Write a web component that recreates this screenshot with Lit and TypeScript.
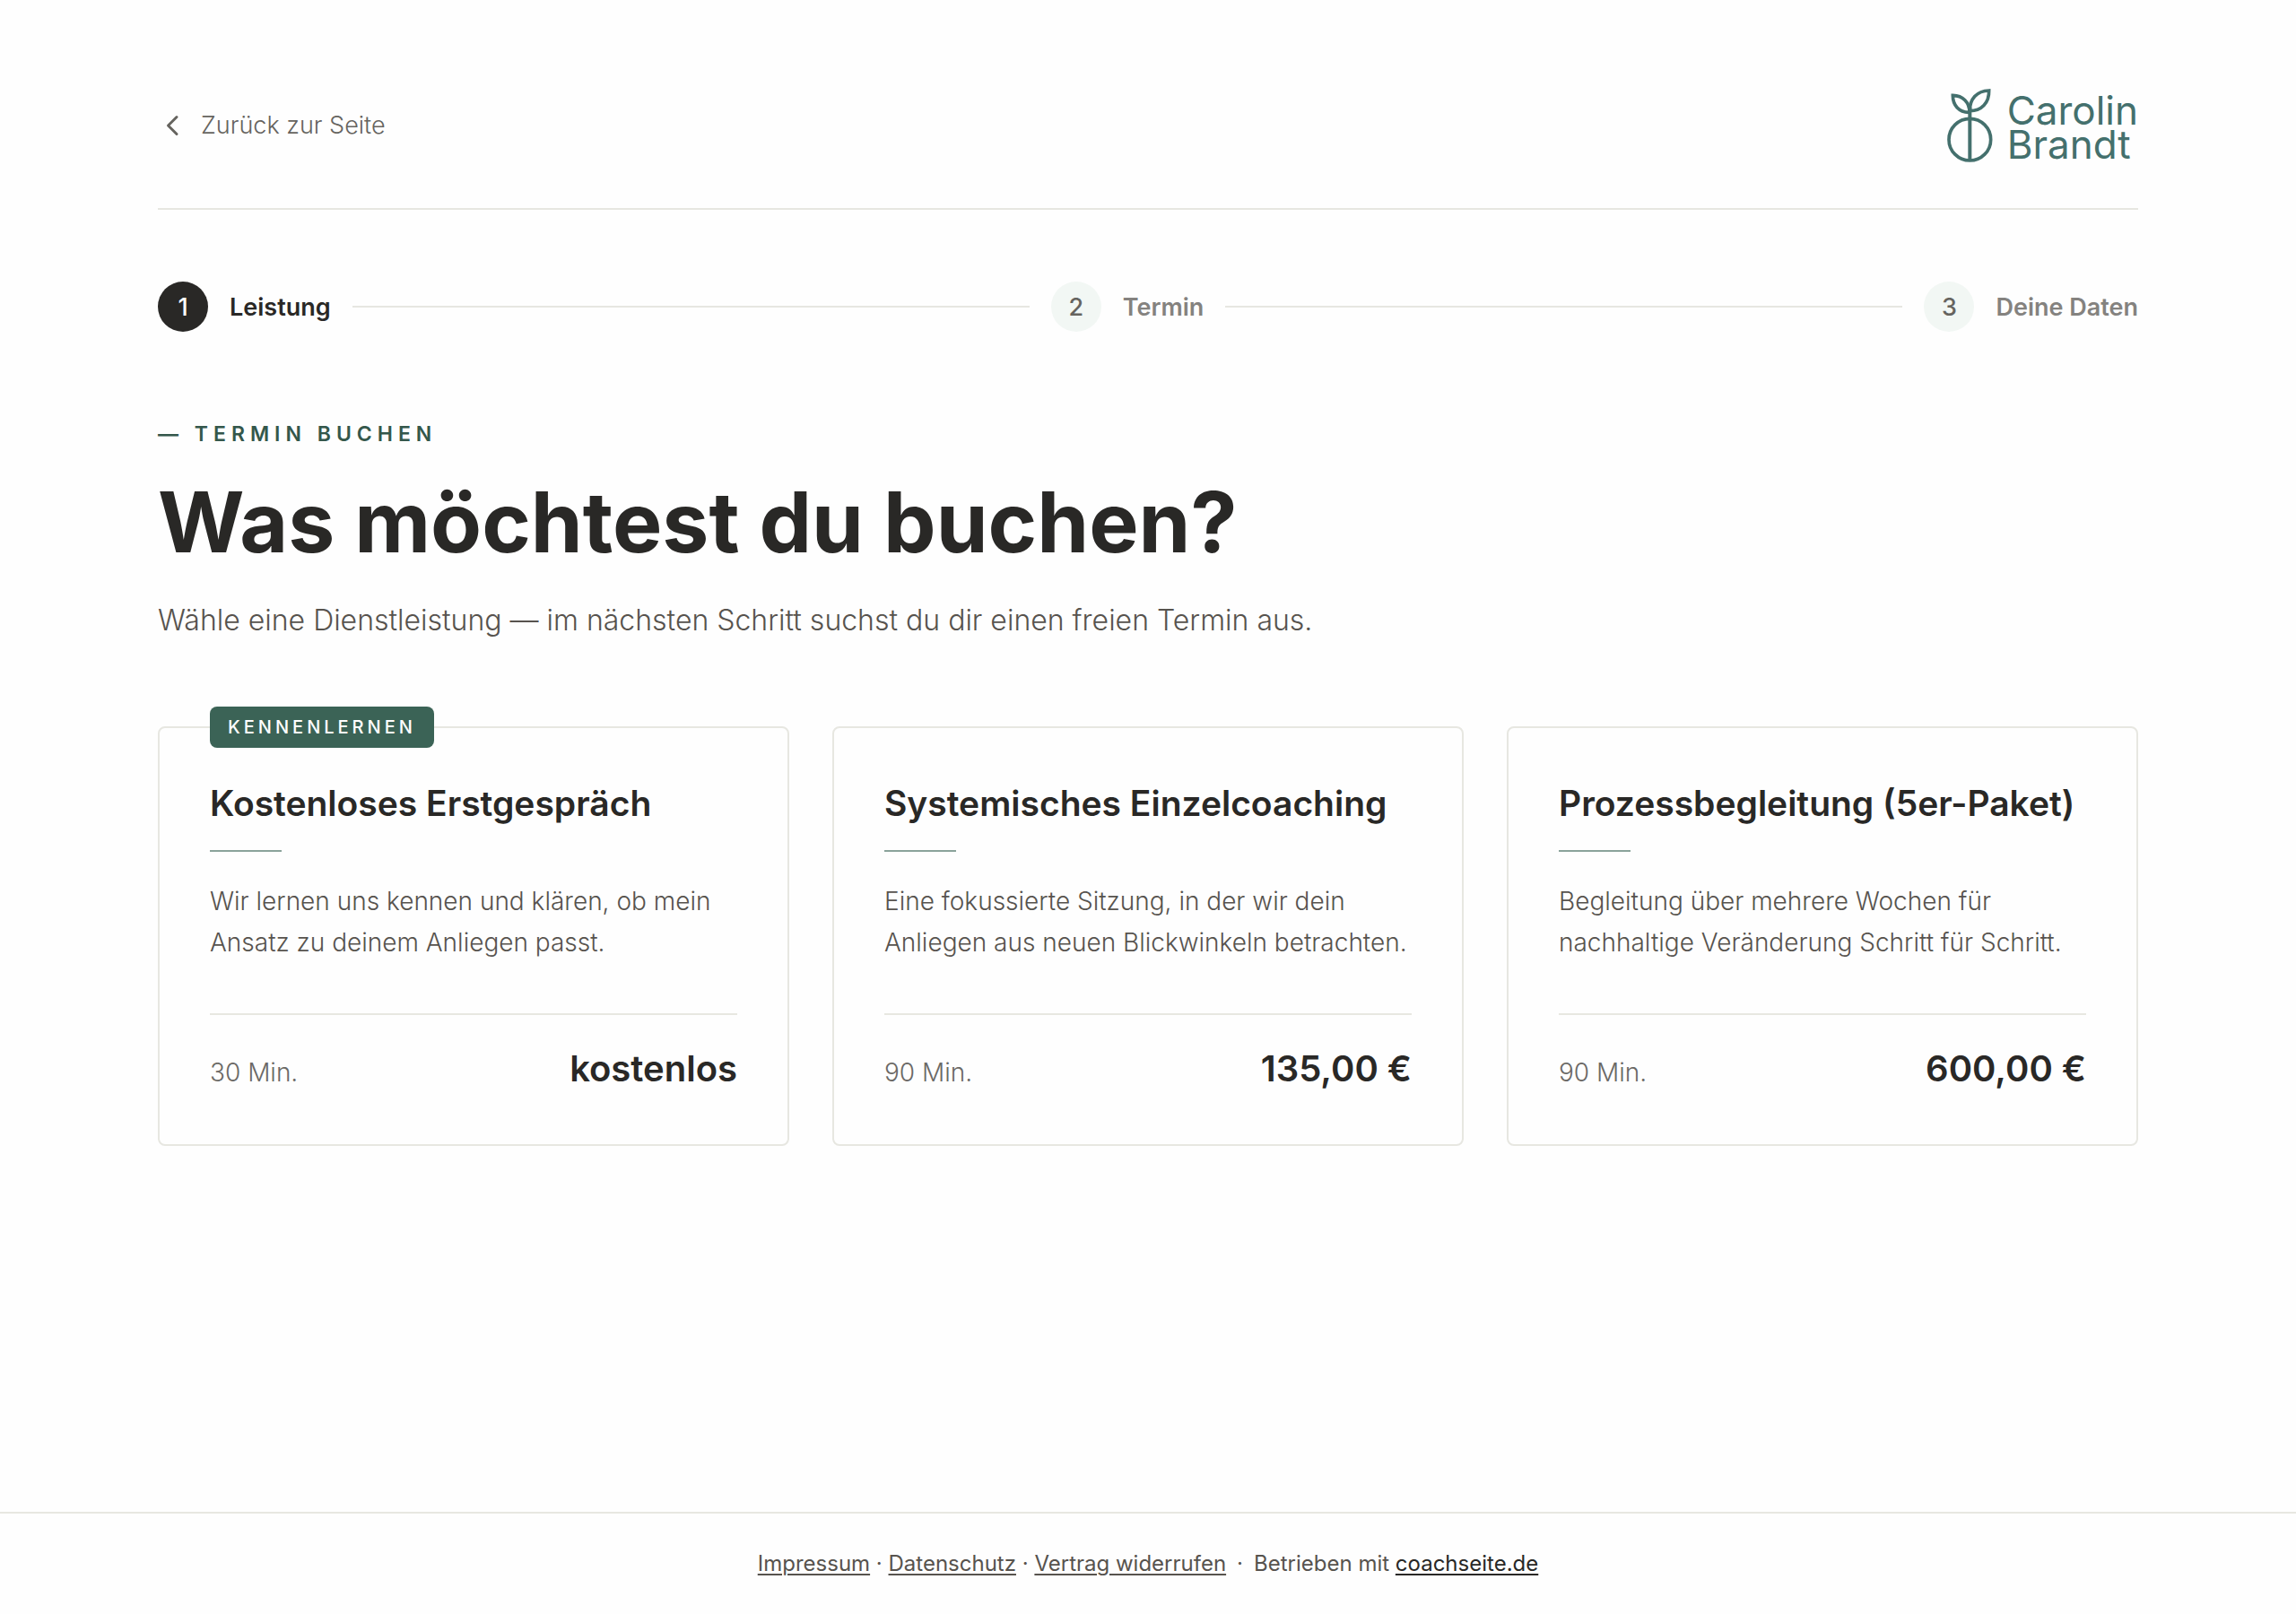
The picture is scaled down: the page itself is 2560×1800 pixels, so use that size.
import { LitElement, html, css, svg, nothing } from "lit";
import { customElement, property } from "lit/decorators.js";
import { classMap } from "lit/directives/class-map.js";

interface Service {
  title: string;
  text: string;
  duration: string;
  price: string;
  badge?: string;
}

const SERVICES: Service[] = [
  {
    title: "Kostenloses Erstgespräch",
    text: "Wir lernen uns kennen und klären, ob mein Ansatz zu deinem Anliegen passt.",
    duration: "30 Min.",
    price: "kostenlos",
    badge: "Kennenlernen",
  },
  {
    title: "Systemisches Einzelcoaching",
    text: "Eine fokussierte Sitzung, in der wir dein Anliegen aus neuen Blickwinkeln betrachten.",
    duration: "90 Min.",
    price: "135,00\u00a0€",
  },
  {
    title: "Prozessbegleitung (5er-Paket)",
    text: "Begleitung über mehrere Wochen für nachhaltige Veränderung Schritt für Schritt.",
    duration: "90 Min.",
    price: "600,00\u00a0€",
  },
];

const STEPS = ["Leistung", "Termin", "Deine Daten"];

const chevron = svg`<path d="M21 6.500 L11.500 16 L21 25.500" fill="none" stroke="currentColor" stroke-width="3" stroke-linecap="round" stroke-linejoin="round" />`;

const sprout = svg`
  <g fill="none" stroke="currentColor" stroke-width="11">
    <circle cx="169" cy="227" r="70" />
    <path d="M169 297 V118" stroke-width="12" />
    <path d="M168 136 C132 137 112 112 112 79 C146 80 168 102 168 136 Z" />
    <path d="M169 131 C168 92 192 64 233 63 C234 104 208 131 169 131 Z" />
  </g>
`;

@customElement("brand-logo")
export class BrandLogo extends LitElement {
  static styles = css`
    :host {
      display: block;
    }
    .logo {
      display: flex;
      align-items: center;
      gap: 16px;
      color: #44706d;
      text-decoration: none;
    }
    .mark {
      width: 52px;
      height: 84px;
      flex: none;
    }
    .name {
      display: grid;
      padding-top: 4px;
      font-size: 44px;
      line-height: 38px;
    }
  `;

  render() {
    return html`
      <a class="logo" href="#">
        <svg class="mark" viewBox="90 54 156 252" aria-hidden="true">${sprout}</svg>
        <span class="name"><span>Carolin</span><span>Brandt</span></span>
      </a>
    `;
  }
}

@customElement("service-card")
export class ServiceCard extends LitElement {
  @property({ attribute: false }) service!: Service;

  static styles = css`
    :host {
      display: grid;
    }
    .card {
      position: relative;
      display: flex;
      flex-direction: column;
      padding: 56px;
      border: 2px solid #e7e7e1;
      border-radius: 8px;
      background: #fefefe;
      color: #57534e;
      text-decoration: none;
    }
    .badge {
      position: absolute;
      top: -24px;
      left: 56px;
      padding: 0 20px;
      border-radius: 8px;
      background: #3b6356;
      color: #ffffff;
      font-size: 20px;
      font-weight: 500;
      line-height: 46px;
      letter-spacing: 4px;
      text-transform: uppercase;
    }
    .title {
      margin: 0;
      color: #292826;
      font-size: 39px;
      font-weight: 600;
      line-height: 56px;
    }
    .rule {
      width: 80px;
      height: 2px;
      margin-top: 24px;
      background: #8aa39b;
    }
    .text {
      margin: 32px 0 56px;
      font-size: 28px;
      font-weight: 300;
      line-height: 46px;
    }
    .meta {
      display: flex;
      align-items: baseline;
      justify-content: space-between;
      margin-top: auto;
      padding-top: 32px;
      border-top: 2px solid #e7e7e1;
    }
    .duration {
      color: #6b6966;
      font-size: 28px;
      font-weight: 300;
    }
    .price {
      color: #292826;
      font-size: 40px;
      font-weight: 600;
      line-height: 56px;
    }
  `;

  render() {
    const { title, text, duration, price, badge } = this.service;
    return html`
      <a class="card" href="#termin">
        ${badge ? html`<span class="badge">${badge}</span>` : nothing}
        <h2 class="title">${title}</h2>
        <span class="rule"></span>
        <p class="text">${text}</p>
        <span class="meta">
          <span class="duration">${duration}</span>
          <span class="price">${price}</span>
        </span>
      </a>
    `;
  }
}

@customElement("app-root")
export class AppRoot extends LitElement {
  static styles = css`
    :host {
      display: flex;
      flex-direction: column;
      min-height: 100vh;
      background: #fefefe;
      color: #57534e;
      font-family: Inter, "Liberation Sans", sans-serif;
      font-size: 27px;
    }
    .page {
      flex: 1;
      padding: 96px 176px;
    }
    .header {
      display: flex;
      align-items: center;
      justify-content: space-between;
      min-height: 88px;
      padding-bottom: 48px;
      border-bottom: 2px solid #e7e7e1;
    }
    .back {
      display: flex;
      align-items: center;
      gap: 16px;
      color: #66645f;
      font-weight: 300;
      line-height: 40px;
      text-decoration: none;
    }
    .chevron {
      width: 32px;
      height: 32px;
    }
    .steps {
      display: flex;
      align-items: center;
      gap: 24px;
      margin: 80px 0 0;
      padding: 0;
      list-style: none;
    }
    .step {
      display: flex;
      align-items: center;
      gap: 24px;
      color: #84827f;
      font-weight: 600;
    }
    .step.line {
      flex: 1;
      height: 2px;
      background: #e7e7e1;
    }
    .number {
      display: grid;
      place-items: center;
      width: 56px;
      height: 56px;
      border-radius: 50%;
      background: #f2f7f4;
      color: #66645f;
      font-weight: 500;
    }
    .current {
      color: #292826;
    }
    .current .number {
      background: #292826;
      color: #ffffff;
    }
    .eyebrow {
      margin: 96px 0 0;
      color: #34574b;
      font-size: 23px;
      font-weight: 600;
      line-height: 36px;
      letter-spacing: 6px;
      text-transform: uppercase;
    }
    .headline {
      margin: 24px 0 0;
      color: #292826;
      font-size: 93px;
      font-weight: 700;
      line-height: 112px;
    }
    .intro {
      margin: 28px 0 0;
      font-size: 32px;
      font-weight: 300;
      line-height: 52px;
    }
    .services {
      display: grid;
      grid-template-columns: repeat(3, minmax(0, 1fr));
      gap: 48px;
      margin-top: 92px;
    }
    .footer {
      display: flex;
      justify-content: center;
      gap: 12px;
      padding: 36px 48px;
      border-top: 2px solid #e7e7e1;
      font-size: 24px;
      font-weight: 400;
      line-height: 40px;
    }
    .link {
      color: inherit;
      text-decoration-thickness: 2px;
      text-underline-offset: 3px;
    }
    .link.strong {
      color: #292826;
    }
  `;

  private renderStep(label: string, index: number) {
    return html`
      ${index > 0 ? html`<li class="step line" role="presentation"></li>` : nothing}
      <li class=${classMap({ step: true, current: index === 0 })}>
        <span class="number">${index + 1}</span>
        <span>${label}</span>
      </li>
    `;
  }

  render() {
    return html`
      <main class="page">
        <header class="header">
          <a class="back" href="#">
            <svg class="chevron" viewBox="0 0 32 32" aria-hidden="true">${chevron}</svg>
            <span>Zurück zur Seite</span>
          </a>
          <brand-logo></brand-logo>
        </header>
        <ol class="steps">
          ${STEPS.map((label, index) => this.renderStep(label, index))}
        </ol>
        <p class="eyebrow">— Termin buchen</p>
        <h1 class="headline">Was möchtest du buchen?</h1>
        <p class="intro">
          Wähle eine Dienstleistung — im nächsten Schritt suchst du dir einen freien Termin aus.
        </p>
        <section class="services">
          ${SERVICES.map((service) => html`<service-card .service=${service}></service-card>`)}
        </section>
      </main>
      <footer class="footer">
        <span>
          <a class="link" href="#impressum">Impressum</a> ·
          <a class="link" href="#datenschutz">Datenschutz</a> ·
          <a class="link" href="#widerruf">Vertrag widerrufen</a>
        </span>
        <span>·</span>
        <span>Betrieben mit <a class="link strong" href="#coachseite">coachseite.de</a></span>
      </footer>
    `;
  }
}
